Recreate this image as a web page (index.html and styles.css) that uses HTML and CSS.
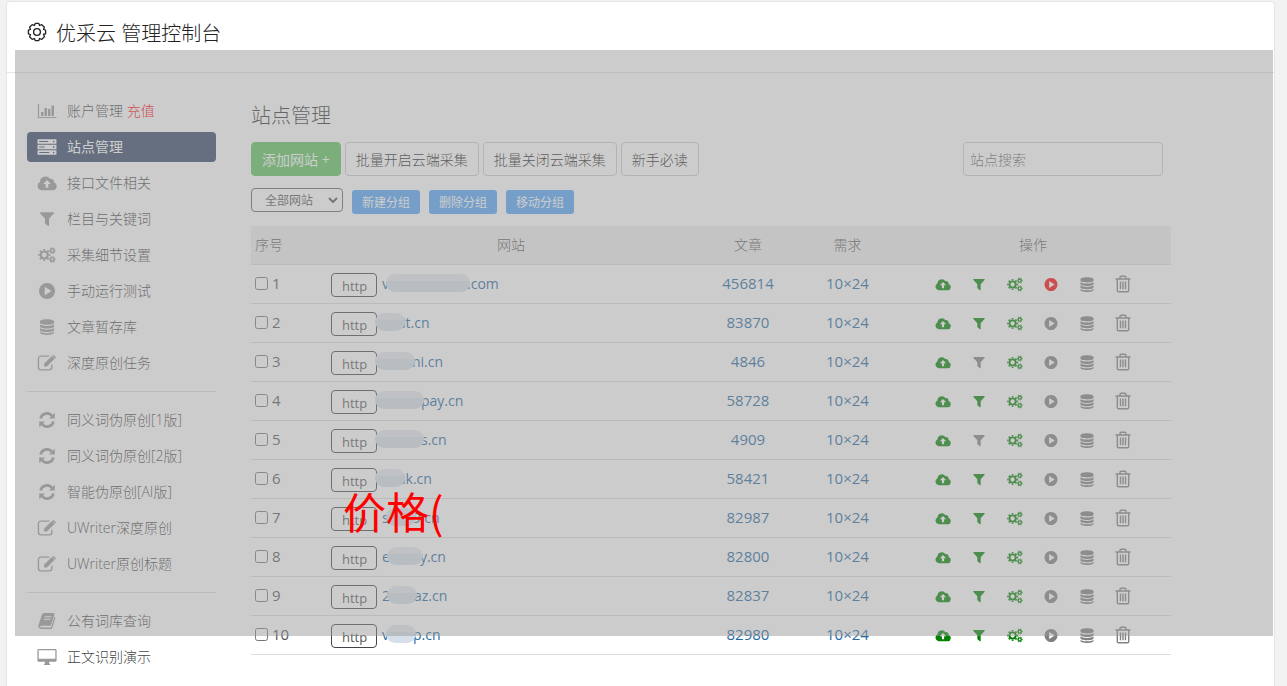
FILE: index.html
```html
<!DOCTYPE html>
<html lang="zh-CN">
<head>
  <meta charset="UTF-8" />
  <meta name="viewport" content="width=device-width, initial-scale=1.0" />
  <title>优采云 管理控制台</title>
  <link rel="stylesheet" href="styles.css">
</head>
<body>

  <svg class="sprite" aria-hidden="true">
    <symbol id="i-chart" viewBox="0 0 20 16">
      <path d="M1.500 1v13.500H19.500" fill="none" stroke="currentColor" stroke-width="1.200"/>
      <path d="M4 9h2.500v4H4zM7.500 5h2.500v8H7.500zM11 6h2.500v7H11zM14.500 2.500h2.500v10.500h-2.500z"/>
    </symbol>
    <symbol id="i-server" viewBox="0 0 18 14">
      <path fill-rule="evenodd" d="M.5 0h17v4H.5zM.5 5h17v4H.5zM.5 10h17v4H.5zM2 1.500v1h8v-1zM2 6.500v1h5v-1zM2 11.500v1h9v-1zM15 1.300a.7.7 0 1 0 .1 0zM15 6.300a.7.7 0 1 0 .1 0zM15 11.300a.7.7 0 1 0 .1 0z"/>
    </symbol>
    <symbol id="i-cloud" viewBox="0 0 18 14">
      <path fill-rule="evenodd" d="M4 13.500A4 4 0 0 1 2.700 6 5 5 0 0 1 11.800 3.300 2.600 2.600 0 0 1 15.200 6.300 3.700 3.700 0 0 1 14.300 13.500zM9 4.200L5.500 7.800h2.300v3.400h2.400V7.800h2.300z"/>
    </symbol>
    <symbol id="i-filter" viewBox="0 0 14 14">
      <path d="M1.300 1h11.400q.8.4.3 1.100L8.800 6.600v6q-.1.900-.9.500L5.400 11q-.2-.2-.2-.6V6.600L1 2.100Q.5 1.400 1.300 1z"/>
    </symbol>
    <symbol id="i-cogs" viewBox="0 0 18 16">
      <g fill="none" stroke="currentColor">
        <circle cx="6.300" cy="8" r="3.500" stroke-width="2.200"/>
        <circle cx="6.300" cy="8" r="5.300" stroke-width="1.600" pathLength="16" stroke-dasharray="1 1" stroke-dashoffset=".5"/>
        <circle cx="14.300" cy="3.600" r="1.800" stroke-width="1.500"/>
        <circle cx="14.300" cy="3.600" r="2.900" stroke-width="1" pathLength="12" stroke-dasharray="1 1" stroke-dashoffset=".5"/>
        <circle cx="14.300" cy="12.400" r="1.800" stroke-width="1.500"/>
        <circle cx="14.300" cy="12.400" r="2.900" stroke-width="1" pathLength="12" stroke-dasharray="1 1" stroke-dashoffset=".5"/>
      </g>
    </symbol>
    <symbol id="i-play" viewBox="0 0 14 14">
      <path fill-rule="evenodd" d="M7 0a7 7 0 1 0 .01 0zM5 3.300v7.400L11 7z"/>
    </symbol>
    <symbol id="i-data" viewBox="0 0 14 16">
      <path d="M0 2.500C0-.6 14-.6 14 2.500v1.300C14 6.500 0 6.500 0 3.800zM0 5.300c2 2.300 12 2.300 14 0v2.100c0 2.800-14 2.800-14 0zM0 8.900c2 2.300 12 2.300 14 0V11c0 2.800-14 2.800-14 0zM0 12.500c2 2.300 12 2.300 14 0v1c0 3.200-14 3.200-14 0z"/>
    </symbol>
    <symbol id="i-edit" viewBox="0 0 17 14">
      <path d="M12.700 8.500v2.300a2.200 2.200 0 0 1-2.200 2.200H3.200A2.200 2.200 0 0 1 1 10.800V3.200A2.200 2.200 0 0 1 3.200 1h7.300" fill="none" stroke="currentColor" stroke-width="1.200"/>
      <path d="M6 7.500L12.800.8l2.400 2.400L8.400 10H6zM13.500.2q.7-.4 1.300.2l1.100 1.100q.6.600.1 1.200l-.4.300L13.200.600z"/>
    </symbol>
    <symbol id="i-refresh" viewBox="0 0 14 14">
      <path d="M1.400 5.700A5.700 5.700 0 0 1 11.400 3.300M12.600 8.300A5.700 5.700 0 0 1 2.600 10.700" fill="none" stroke="currentColor" stroke-width="2.400"/>
      <path d="M13.800.6v5.100H8.700zM.2 13.400V8.300h5.100z"/>
    </symbol>
    <symbol id="i-book" viewBox="0 0 16 14">
      <path fill-rule="evenodd" d="M5.600 0h8q1.200.2.900 1.300L11.800 10q-.4 1.200-1.600 1.200H3q-1.200 0-1.200.7.200.7 1.200.7h7.800q.8 0 1.100-.8l2.700-8.800q.9.500.6 1.600l-2.500 8.200q-.5 1.200-1.600 1.200H2.700Q.2 13.600.5 11L3.500 1.500Q4 .2 5.600 0zM6 2.800l-.3.900h5.900l.3-.9zM5.400 5l-.3.900H11l.3-.9z"/>
    </symbol>
    <symbol id="i-desktop" viewBox="0 0 18 15">
      <path fill-rule="evenodd" d="M1.300 0h15.400Q18 0 18 1.300v9.400q0 1.300-1.300 1.300H11v1.500q1 .3 1 1.500H6q0-1.200 1-1.500V12H1.300Q0 12 0 10.700V1.300Q0 0 1.300 0zM1.200 1.200v7.900h15.600V1.200z"/>
    </symbol>
    <symbol id="i-trash" viewBox="0 0 16 18">
      <g fill="none" stroke="currentColor" stroke-width="1.400">
        <path d="M.5 4h15M5 4V2.500Q5 1.200 6.200 1.200h3.600Q11 1.200 11 2.500V4M2.300 4v11.500q0 1.300 1.300 1.300h8.800q1.300 0 1.300-1.300V4"/>
        <path d="M5.500 6.500v7.800M8 6.500v7.800M10.500 6.500v7.800"/>
      </g>
    </symbol>
    <symbol id="i-gear" viewBox="-10 -10 20 20">
      <g fill="none" stroke="currentColor" stroke-width="1.300" stroke-linejoin="round">
        <path d="M6.300 1.900L8.600 2.200M-1.800-8.600H1.800L2.500-6.500 4.800-7.400 7.400-4.800 6.500-2.500 8.600-1.800V1.800L6.500 2.500 7.400 4.800 4.800 7.400 2.500 6.500 1.800 8.600H-1.800L-2.500 6.500-4.800 7.400-7.400 4.800-6.500 2.500-8.600 1.800V-1.800L-6.500-2.500-7.400-4.800-4.800-7.400-2.500-6.500z"/>
        <circle r="3.400"/>
      </g>
    </symbol>
  </svg>

  <div class="panel">
    <header class="panel-head">
      <svg class="gear"><use href="#i-gear"/></svg>
      <h1>优采云 管理控制台</h1>
    </header>

    <div class="panel-body">
      <nav class="menu">
        <a href="#"><svg><use href="#i-chart"/></svg><span>账户管理 <em>充值</em></span></a>
        <a href="#" class="active"><svg><use href="#i-server"/></svg><span>站点管理</span></a>
        <a href="#"><svg><use href="#i-cloud"/></svg><span>接口文件相关</span></a>
        <a href="#"><svg><use href="#i-filter"/></svg><span>栏目与关键词</span></a>
        <a href="#"><svg><use href="#i-cogs"/></svg><span>采集细节设置</span></a>
        <a href="#"><svg><use href="#i-play"/></svg><span>手动运行测试</span></a>
        <a href="#"><svg><use href="#i-data"/></svg><span>文章暂存库</span></a>
        <a href="#"><svg><use href="#i-edit"/></svg><span>深度原创任务</span></a>
        <hr>
        <a href="#"><svg><use href="#i-refresh"/></svg><span>同义词伪原创[1版]</span></a>
        <a href="#"><svg><use href="#i-refresh"/></svg><span>同义词伪原创[2版]</span></a>
        <a href="#"><svg><use href="#i-refresh"/></svg><span>智能伪原创[AI版]</span></a>
        <a href="#"><svg><use href="#i-edit"/></svg><span>UWriter深度原创</span></a>
        <a href="#"><svg><use href="#i-edit"/></svg><span>UWriter原创标题</span></a>
        <hr>
        <a href="#"><svg><use href="#i-book"/></svg><span>公有词库查询</span></a>
        <a href="#"><svg><use href="#i-desktop"/></svg><span>正文识别演示</span></a>
      </nav>

      <main class="content">
        <h2>站点管理</h2>

        <div class="toolbar">
          <button class="btn btn-add">添加网站 +</button>
          <button class="btn">批量开启云端采集</button>
          <button class="btn">批量关闭云端采集</button>
          <button class="btn">新手必读</button>
          <input class="search" type="text" placeholder="站点搜索" aria-label="站点搜索">
        </div>

        <div class="groups">
          <span class="group-select">
            <select aria-label="网站分组"><option>全部网站</option></select>
            <svg viewBox="0 0 10 6"><path d="M1 1l4 4 4-4"/></svg>
          </span>
          <button class="btn-group">新建分组</button>
          <button class="btn-group">删除分组</button>
          <button class="btn-group">移动分组</button>
        </div>

        <table class="sites">
          <colgroup>
            <col class="col-no"><col><col class="col-posts"><col class="col-need"><col class="col-ops">
          </colgroup>
          <thead>
            <tr><th>序号</th><th>网站</th><th>文章</th><th>需求</th><th>操作</th></tr>
          </thead>
          <tbody>
            <tr>
              <td><label><input type="checkbox">1</label></td>
              <td><div class="site"><select aria-label="协议"><option>http</option><option>https</option></select><a href="#">v<i class="mask xl"></i>.com</a></div></td>
              <td><a href="#">456814</a></td>
              <td><a href="#">10×24</a></td>
              <td><div class="ops"><svg class="on"><use href="#i-cloud"/></svg><svg class="on small"><use href="#i-filter"/></svg><svg class="on"><use href="#i-cogs"/></svg><svg class="run small"><use href="#i-play"/></svg><svg><use href="#i-data"/></svg><svg class="bin"><use href="#i-trash"/></svg></div></td>
            </tr>
            <tr>
              <td><label><input type="checkbox">2</label></td>
              <td><div class="site"><select aria-label="协议"><option>http</option><option>https</option></select><a href="#"><i class="mask lead xs"></i>it.cn</a></div></td>
              <td><a href="#">83870</a></td>
              <td><a href="#">10×24</a></td>
              <td><div class="ops"><svg class="on"><use href="#i-cloud"/></svg><svg class="on small"><use href="#i-filter"/></svg><svg class="on"><use href="#i-cogs"/></svg><svg class="small"><use href="#i-play"/></svg><svg><use href="#i-data"/></svg><svg class="bin"><use href="#i-trash"/></svg></div></td>
            </tr>
            <tr>
              <td><label><input type="checkbox">3</label></td>
              <td><div class="site"><select aria-label="协议"><option>http</option><option>https</option></select><a href="#"><i class="mask lead md"></i>ni.cn</a></div></td>
              <td><a href="#">4846</a></td>
              <td><a href="#">10×24</a></td>
              <td><div class="ops"><svg class="on"><use href="#i-cloud"/></svg><svg class="small"><use href="#i-filter"/></svg><svg class="on"><use href="#i-cogs"/></svg><svg class="small"><use href="#i-play"/></svg><svg><use href="#i-data"/></svg><svg class="bin"><use href="#i-trash"/></svg></div></td>
            </tr>
            <tr>
              <td><label><input type="checkbox">4</label></td>
              <td><div class="site"><select aria-label="协议"><option>http</option><option>https</option></select><a href="#"><i class="mask lead lg"></i>pay.cn</a></div></td>
              <td><a href="#">58728</a></td>
              <td><a href="#">10×24</a></td>
              <td><div class="ops"><svg class="on"><use href="#i-cloud"/></svg><svg class="on small"><use href="#i-filter"/></svg><svg class="on"><use href="#i-cogs"/></svg><svg class="small"><use href="#i-play"/></svg><svg><use href="#i-data"/></svg><svg class="bin"><use href="#i-trash"/></svg></div></td>
            </tr>
            <tr>
              <td><label><input type="checkbox">5</label></td>
              <td><div class="site"><select aria-label="协议"><option>http</option><option>https</option></select><a href="#"><i class="mask lead lg"></i>s.cn</a></div></td>
              <td><a href="#">4909</a></td>
              <td><a href="#">10×24</a></td>
              <td><div class="ops"><svg class="on"><use href="#i-cloud"/></svg><svg class="small"><use href="#i-filter"/></svg><svg class="on"><use href="#i-cogs"/></svg><svg class="small"><use href="#i-play"/></svg><svg><use href="#i-data"/></svg><svg class="bin"><use href="#i-trash"/></svg></div></td>
            </tr>
            <tr>
              <td><label><input type="checkbox">6</label></td>
              <td><div class="site"><select aria-label="协议"><option>http</option><option>https</option></select><a href="#"><i class="mask lead xs"></i>ik.cn</a></div></td>
              <td><a href="#">58421</a></td>
              <td><a href="#">10×24</a></td>
              <td><div class="ops"><svg class="on"><use href="#i-cloud"/></svg><svg class="on small"><use href="#i-filter"/></svg><svg class="on"><use href="#i-cogs"/></svg><svg class="small"><use href="#i-play"/></svg><svg><use href="#i-data"/></svg><svg class="bin"><use href="#i-trash"/></svg></div></td>
            </tr>
            <tr>
              <td><label><input type="checkbox">7</label></td>
              <td><div class="site"><select aria-label="协议"><option>http</option><option>https</option></select><a href="#">s<i class="mask xs"></i>9.cn</a></div></td>
              <td><a href="#">82987</a></td>
              <td><a href="#">10×24</a></td>
              <td><div class="ops"><svg class="on"><use href="#i-cloud"/></svg><svg class="on small"><use href="#i-filter"/></svg><svg class="on"><use href="#i-cogs"/></svg><svg class="small"><use href="#i-play"/></svg><svg><use href="#i-data"/></svg><svg class="bin"><use href="#i-trash"/></svg></div></td>
            </tr>
            <tr>
              <td><label><input type="checkbox">8</label></td>
              <td><div class="site"><select aria-label="协议"><option>http</option><option>https</option></select><a href="#">e<i class="mask sm"></i>y.cn</a></div></td>
              <td><a href="#">82800</a></td>
              <td><a href="#">10×24</a></td>
              <td><div class="ops"><svg class="on"><use href="#i-cloud"/></svg><svg class="on small"><use href="#i-filter"/></svg><svg class="on"><use href="#i-cogs"/></svg><svg class="small"><use href="#i-play"/></svg><svg><use href="#i-data"/></svg><svg class="bin"><use href="#i-trash"/></svg></div></td>
            </tr>
            <tr>
              <td><label><input type="checkbox">9</label></td>
              <td><div class="site"><select aria-label="协议"><option>http</option><option>https</option></select><a href="#">2<i class="mask xs"></i>az.cn</a></div></td>
              <td><a href="#">82837</a></td>
              <td><a href="#">10×24</a></td>
              <td><div class="ops"><svg class="on"><use href="#i-cloud"/></svg><svg class="on small"><use href="#i-filter"/></svg><svg class="on"><use href="#i-cogs"/></svg><svg class="small"><use href="#i-play"/></svg><svg><use href="#i-data"/></svg><svg class="bin"><use href="#i-trash"/></svg></div></td>
            </tr>
            <tr>
              <td><label><input type="checkbox">10</label></td>
              <td><div class="site"><select aria-label="协议"><option>http</option><option>https</option></select><a href="#">v<i class="mask xs"></i>p.cn</a></div></td>
              <td><a href="#">82980</a></td>
              <td><a href="#">10×24</a></td>
              <td><div class="ops"><svg class="on"><use href="#i-cloud"/></svg><svg class="on small"><use href="#i-filter"/></svg><svg class="on"><use href="#i-cogs"/></svg><svg class="small"><use href="#i-play"/></svg><svg><use href="#i-data"/></svg><svg class="bin"><use href="#i-trash"/></svg></div></td>
            </tr>
          </tbody>
        </table>
      </main>
    </div>

    <div class="overlay"></div>
    <div class="caption">价格(</div>
  </div>

</body>
</html>
```
FILE: styles.css
```css
* {
  box-sizing: border-box;
}
body {
  margin: 0;
  padding: 1px 12px 0 6px;
  background: #f2f2f2;
  font-family: "Open Sans", "Noto Sans CJK SC", sans-serif;
  font-size: 14px;
  color: #555;
}
a {
  color: #23679f;
  text-decoration: none;
}
button, input, select {
  font-family: inherit;
}
svg {
  fill: currentColor;
}
.sprite {
  position: absolute;
  width: 0;
  height: 0;
}

/* panel */
.panel {
  position: relative;
  min-height: calc(100vh - 1px);
  background: #fff;
  border: 1px solid #e5e5e5;
  border-bottom: none;
  border-radius: 4px 4px 0 0;
}
.panel-head {
  display: flex;
  align-items: center;
  gap: 9px;
  height: 71px;
  padding: 0 20px 10px;
  border-bottom: 1px solid #e5e5e5;
  color: #222;
}
.panel-head h1 {
  margin: 0;
  font-size: 20px;
  font-weight: 300;
}
.gear {
  width: 20px;
  height: 20px;
}
.panel-body {
  display: flex;
  gap: 35px;
  padding: 23px 103px 8px 20px;
}

/* sidebar */
.menu {
  flex: 0 0 189px;
}
.menu a {
  display: flex;
  align-items: center;
  height: 30px;
  margin-bottom: 6px;
  padding-left: 10px;
  border-radius: 4px;
  color: #444;
  font-weight: 300;
}
.menu span {
  padding-bottom: 2px;
}
.menu svg {
  width: 20px;
  height: 16px;
  margin-right: 10px;
  color: #999;
}
.menu em {
  color: #f00;
  font-style: normal;
}
.menu .active {
  background: #334565;
  color: #fff;
  font-weight: 400;
}
.menu .active svg {
  color: #fff;
}
.menu hr {
  margin: 13px 0;
  border: none;
  border-top: 1px solid #ddd;
}

/* content */
.content {
  flex: 1;
  min-width: 0;
}
.content h2 {
  height: 46px;
  margin: 0;
  padding-top: 5px;
  color: #333;
  font-size: 20px;
  font-weight: 300;
  line-height: 30px;
}
.toolbar {
  display: flex;
  gap: 4px;
  padding-right: 8px;
}
.btn {
  height: 34px;
  padding: 0 10px;
  background: #fff;
  border: 1px solid #ccc;
  border-radius: 4px;
  color: #222;
  font-size: 14px;
  font-weight: 300;
  white-space: nowrap;
}
.btn-add {
  background: #5cc35c;
  border-color: #5cc35c;
  color: #fff;
  font-weight: 400;
}
.search {
  width: 200px;
  height: 34px;
  margin-left: auto;
  padding: 0 6px;
  background: #fff;
  border: 1px solid #ccc;
  border-radius: 4px;
  font-size: 14px;
  font-weight: 300;
}
.search::placeholder {
  color: #666;
}
.groups {
  display: flex;
  align-items: flex-end;
  gap: 9px;
  height: 38px;
  margin-bottom: 12px;
}
.group-select {
  position: relative;
  align-self: center;
}
.group-select select {
  display: block;
  width: 92px;
  height: 24px;
  margin-top: 10px;
  padding: 0 13px;
  appearance: none;
  background: #fff;
  border: 1px solid #666;
  border-radius: 4px;
  color: #555;
  font-size: 12px;
}
.group-select svg {
  position: absolute;
  right: 5px;
  bottom: 9px;
  width: 10px;
  height: 6px;
  fill: none;
  stroke: #555;
  stroke-width: 2;
}
.btn-group {
  width: 68px;
  height: 24px;
  padding: 0;
  background: #51a3f7;
  border: none;
  border-radius: 3px;
  color: #fff;
  font-size: 12px;
}

/* site list */
.sites {
  width: 100%;
  border-collapse: separate;
  border-spacing: 0;
  table-layout: fixed;
}
.col-no {
  width: 80px;
}
.col-posts {
  width: 114px;
}
.col-need {
  width: 85px;
}
.col-ops {
  width: 281px;
}
.sites th, .sites td {
  height: 39px;
  padding: 0 0 2px;
  border-bottom: 1px solid #ddd;
  text-align: center;
}
.sites th {
  background: #eee;
  font-weight: 300;
}
.sites td {
  font-size: 15px;
}
.sites th:first-child, .sites td:first-child {
  padding-left: 4px;
  text-align: left;
}
.sites th:last-child, .sites td:last-child {
  padding-left: 5px;
}
.sites label {
  display: flex;
  align-items: center;
  gap: 4px;
}
.sites input {
  width: 13px;
  height: 13px;
  margin: 0;
}
.site {
  display: flex;
  align-items: center;
  gap: 5px;
}
.site select {
  width: 46px;
  height: 24px;
  margin-top: 4px;
  padding: 2px 0 0 10px;
  appearance: none;
  background: #fff;
  border: 1px solid #444;
  border-radius: 4px;
  color: #555;
  font-size: 13px;
}
.site a {
  display: flex;
  align-items: center;
  font-size: 14px;
}
/* smudge over the private part of a domain */
.mask {
  position: relative;
  height: 18px;
  margin: 0 -3px;
  background: linear-gradient(#e4e9ee 40%, #d6e0ea 40%);
  border-radius: 9px;
}
.lead {
  margin-left: -7px;
}
.xs {
  width: 30px;
}
.sm {
  width: 36px;
}
.md {
  width: 40px;
}
.lg {
  width: 49px;
}
.xl {
  width: 84px;
}
.ops {
  display: flex;
  justify-content: center;
  align-items: center;
  gap: 20px;
  padding-top: 2px;
}
.ops svg {
  width: 16px;
  height: 15px;
  color: #808080;
}
.ops .small {
  height: 13px;
}
.ops .bin {
  height: 18px;
}
.ops .on {
  color: #008000;
}
.ops .run {
  color: #f00;
}

/* grey layer over the console */
.overlay {
  position: absolute;
  top: 48px;
  left: 8px;
  right: 1px;
  height: 586px;
  background: rgba(153, 153, 153, 0.5);
  pointer-events: none;
}
.caption {
  position: absolute;
  top: 478px;
  left: 336px;
  color: #f00;
  font-family: "Noto Sans CJK SC", sans-serif;
  font-size: 43px;
  line-height: 60px;
}
```
